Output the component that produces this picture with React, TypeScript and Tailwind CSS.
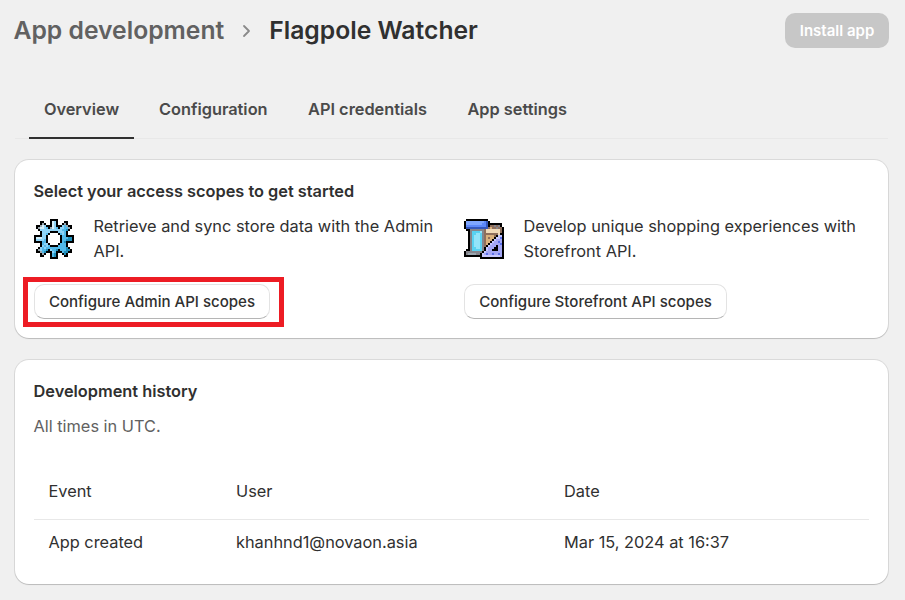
import React from "react";

const palette: Record<string, string> = {
  k: "#000000", w: "#d5f0fb", l: "#8fd3f6", b: "#52b9e9", d: "#1f8fbb", g: "#9aa7b0",
  B: "#5c88fa", D: "#3558bd", L: "#7fa6ff", G: "#85858c", c: "#58d2f2", C: "#93e4fa",
  t: "#d9b07c", T: "#8f6f5c", i: "#f0d9b8", p: "#a3a6f4", P: "#5a6fe8", q: "#c6c8ff",
};

const gear = [
  "........kkkk........",
  "...kk...kwlk...kk...",
  "...kgk..kwlk..kgk...",
  ".kkgwlkkkwlkkklbgkk.",
  ".kgwwlbkgwlbkllbbgk.",
  "..klllllllllllbbdk..",
  "...kllllkkkklllbk...",
  "...kllbk....kblbk...",
  "kkkkllk......kbbkkkk",
  "kwwwllk......kbbbddk",
  "kllllbk......kbbdddk",
  "kkkkbbk......kbdkkkk",
  "...kbllk....kbbbk...",
  "...klblbkkkkbbbbk...",
  "..klblbbbbbbbbbbdk..",
  ".kglbbdklbbdkbbbddk.",
  ".kkgbdkkklbkkkbddkk.",
  "...kgk..kbdk..kdk...",
  "...kk...kbdk...kk...",
  "........kkkk........",
];

const store = [
  ".kkkkkkkkkkk........",
  "kLLLLLLLLLBDk.......",
  "kLLLLLLLLBBDkkkkkkk.",
  "kBBBBBBBBBBDkTTGTGk.",
  "kDDDDDDDDDDDTtTTGTTk",
  ".kkGGGGGGGTiiiiiiiTk",
  "..kGccccCGTiiiiiiiTk",
  "..kGccCCcGTTTTTTTikk",
  "..kGcCCCcGTttttTkqqk",
  "..kGcCCCcGTtTttkqqPk",
  "..kGcCCCcGTtttkqpppk",
  "..kGcCCCcGTttkqppPpk",
  "..kGcCCCcGTtkqppppPk",
  "..kGcCCCcGTkqpppkppk",
  "..kGccCCcGkqpppkkppk",
  ".kkGcccccGkqppkkkppk",
  "kGGGGGGGGkqppppppppk",
  "kGggggGGkqpPppPppPpk",
  "kkkkkkkkkqqqqqqqqqpk",
  "........kkkkkkkkkkkk",
];

function Pixels({ rows }: { rows: string[] }) {
  return (
    <svg className="size-10 shrink-0" viewBox="0 0 20 20" shapeRendering="crispEdges" aria-hidden="true">
      {rows.flatMap((r, y) =>
        r.split("").map((c, x) => (c === "." ? null : <rect key={`${x}-${y}`} x={x} y={y} width="1" height="1" fill={palette[c]} />)),
      )}
    </svg>
  );
}

const card = "rounded-[14px] bg-white shadow-[0_1px_1px_rgba(0,0,0,0.14),0_0_0_1px_rgba(0,0,0,0.09)]";
const button =
  "flex h-[35px] items-center justify-center whitespace-nowrap rounded-[10px] border border-[#e3e3e3] border-b-[#b5b5b5] text-[15.05px] font-medium text-[#303030]";

export default function App() {
  return (
    <div className="flex h-[600px] w-[905px] flex-col overflow-hidden bg-[#f0f0f0] pl-[15px] pr-[17px] font-['Inter',sans-serif] text-[16.33px] leading-[25px] text-[#303030]">
      <header className="-mx-px flex h-[79px] items-start pt-[13px]">
        <h1 className="-ml-[0.5px] flex h-[35px] items-center text-[24.7px] font-semibold">
          <span className="text-[#616161]">App development</span>
          <svg className="ml-[18px] mr-[18px] h-[14px] w-[9px]" viewBox="0 0 9 14" fill="none" stroke="#8a8a8a" strokeWidth="1.8" strokeLinecap="round" strokeLinejoin="round">
            <path d="M2 2l5 5-5 5" />
          </svg>
          <span>Flagpole Watcher</span>
        </h1>
        <button className="ml-auto h-[35px] w-[104px] rounded-[10px] bg-[#c7c7c7] text-[15px] font-semibold text-white">Install app</button>
      </header>
      <nav className="flex h-[60px] border-b border-[#e8e8e8] pl-[14px] font-semibold text-[#4a4a4a]">
        <div className="mr-[25px] h-[60px] w-[105px] border-b-2 border-[#303030] pt-[18px] text-center">Overview</div>
        <div className="mr-[40.5px] pt-[18px]">Configuration</div>
        <div className="mr-[40.5px] pt-[18px]">API credentials</div>
        <div className="pt-[18px]">App settings</div>
      </nav>
      <section className={`${card} mt-[21px] h-[178px] shrink-0 px-[19px] pt-[19px]`}>
        <h2 className="-ml-[0.5px] font-semibold">Select your access scopes to get started</h2>
        <div className="mt-[10px] flex">
          <div className="w-[430px]">
            <div className="flex gap-[19.5px]">
              <div className="pt-[5px]"><Pixels rows={gear} /></div>
              <p className="w-[350px]">Retrieve and sync store data with the Admin API.</p>
            </div>
            <div className="-ml-[11px] mt-[13px] h-[50px] w-[261px] border-[5px] border-[#ed1c24] pl-[6px] pt-[2px]">
              <button className={`${button} w-[236px]`}>Configure Admin API scopes</button>
            </div>
          </div>
          <div>
            <div className="flex gap-[19.5px]">
              <div className="pt-[5px]"><Pixels rows={store} /></div>
              <p className="w-[345px]">Develop unique shopping experiences with Storefront API.</p>
            </div>
            <button className={`${button} mt-[20px] w-[263px]`}>Configure Storefront API scopes</button>
          </div>
        </div>
      </section>
      <section className={`${card} mt-[22px] h-[224px] shrink-0 px-[19px] pt-[19px]`}>
        <h2 className="-ml-[0.5px] font-semibold">Development history</h2>
        <p className="-ml-[0.5px] mt-[10px] text-[#616161]">All times in UTC.</p>
        <div className="mt-[26px] grid grid-cols-[187.5px_328px_1fr] border-b border-[#e8e8e8] pb-[15px] pl-[14.5px] pt-[14px]">
          <span>Event</span><span>User</span><span>Date</span>
        </div>
        <div className="grid grid-cols-[187.5px_328px_1fr] pl-[14.5px] pt-[10px]">
          <span>App created</span><span>khanhnd1@novaon.asia</span><span>Mar 15, 2024 at 16:37</span>
        </div>
      </section>
    </div>
  );
}
